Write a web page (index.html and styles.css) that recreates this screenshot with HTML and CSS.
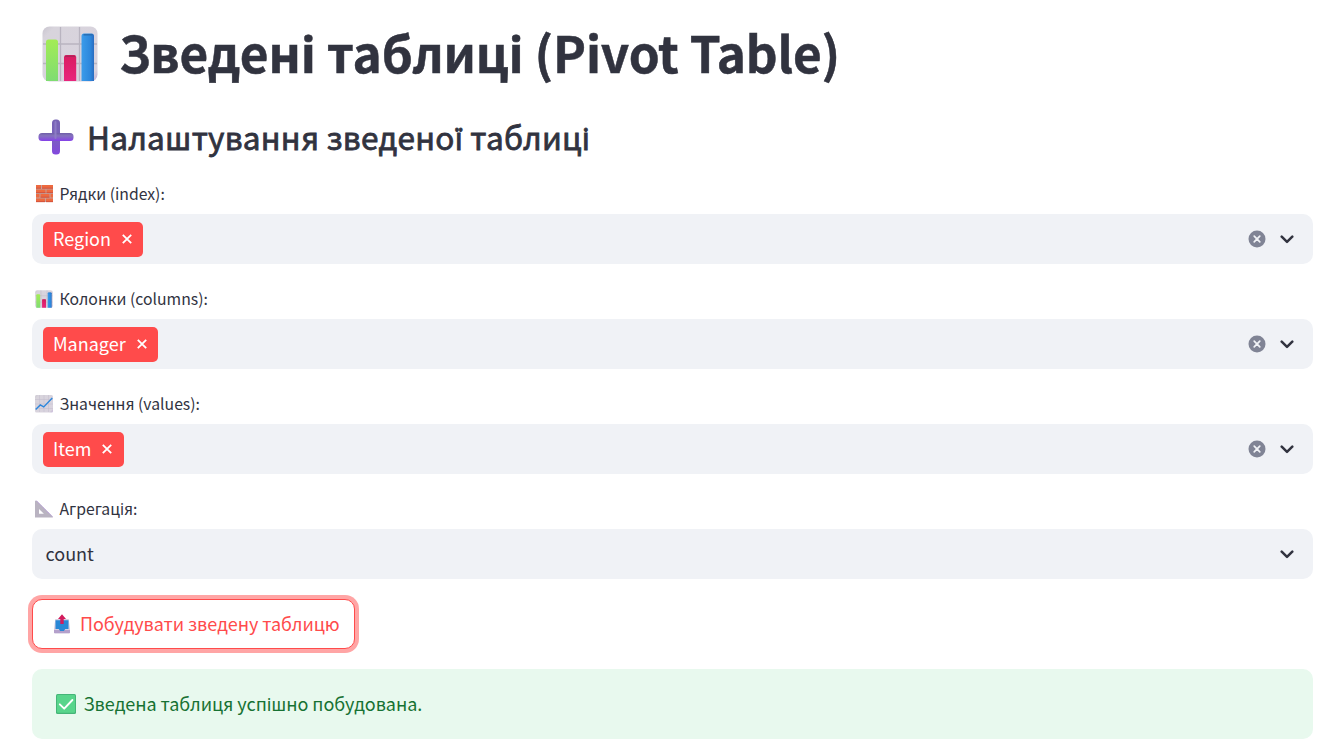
FILE: index.html
```html
<!DOCTYPE html>
<html lang="uk">
<head>
<meta charset="utf-8">
<title>Зведені таблиці</title>
<link rel="stylesheet" href="styles.css">
</head>
<body>
<svg class="defs" aria-hidden="true">
  <defs>
    <linearGradient id="board" x1="0" y1="0" x2="1" y2="1"><stop offset="0" stop-color="#c9c5cf"/><stop offset=".12" stop-color="#d8d4dc"/><stop offset=".88" stop-color="#d9d3de"/><stop offset="1" stop-color="#bfaed4"/></linearGradient>
    <linearGradient id="green" x1="0" y1="0" x2="0" y2="1"><stop offset="0" stop-color="#a3ec55"/><stop offset="1" stop-color="#7fdc72"/></linearGradient>
    <linearGradient id="pink" x1="0" y1="0" x2="0" y2="1"><stop offset="0" stop-color="#d91b60"/><stop offset="1" stop-color="#e8267c"/></linearGradient>
    <linearGradient id="blue" x1="0" y1="0" x2="1" y2="0"><stop offset="0" stop-color="#3b9cea"/><stop offset=".7" stop-color="#2d87dc"/><stop offset="1" stop-color="#2a6cc0"/></linearGradient>
    <linearGradient id="violet" x1="0" y1="0" x2="0" y2="1"><stop offset="0" stop-color="#7763b4"/><stop offset=".5" stop-color="#7a63bb"/><stop offset="1" stop-color="#8347df"/></linearGradient>
    <linearGradient id="arm" x1="0" y1="0" x2="0" y2="1"><stop offset="0" stop-color="#6f5da8"/><stop offset=".35" stop-color="#8573bd"/><stop offset="1" stop-color="#8440e8"/></linearGradient>
  </defs>
  <symbol id="chart" viewBox="0 0 56 56">
    <rect x=".5" y=".5" width="55" height="55" rx="7" fill="url(#board)"/>
    <path d="M18.500 1v54M37.500 1v54M1 18h54M1 37.500h54" stroke="#b9b4c0" stroke-width="1.300"/>
    <path d="M4 55V16q0-2.500 2.500-2.500h7q2.500 0 2.500 2.500v39z" fill="url(#green)"/>
    <path d="M22 55V31q0-2 2.500-2h7.500q2.200 0 2.200 2v24z" fill="url(#pink)"/>
    <path d="M39.500 55V10q0-2.500 2.500-2.500h7.500q2.500 0 2.500 2.500v45z" fill="url(#blue)"/>
    <path d="M23 30.300h10" stroke="#ac2558" stroke-width="1.400"/>
    <path d="M41.500 8.800h9" stroke="#286cb0" stroke-width="1.400"/>
  </symbol>
</svg>
<main class="page">
  <h1 class="title"><svg class="title-icon"><use href="#chart"/></svg><span>Зведені таблиці (Pivot Table)</span></h1>
  <h2 class="subtitle">
    <svg class="subtitle-icon" viewBox="0 0 36 36"><rect x="14" y=".5" width="8" height="35" rx="3.500" fill="url(#violet)"/><rect x=".5" y="14" width="35" height="8" rx="3.500" fill="url(#arm)"/><path d="M17.500 3v16" stroke="#8d7cc5" stroke-width="2" stroke-linecap="round"/></svg>
    <span>Налаштування зведеної таблиці</span>
  </h2>

  <section class="field">
    <div class="label">
      <svg class="emoji" viewBox="0 0 18 18"><rect x="1" width="17" height="17" fill="#c4a09a"/><path d="M1 0h5v3.500H1zM7 0h11v3.500H7zM1 4.500h9.500v3.500H1zM11.500 4.500H18V8h-6.500zM1 9h3.500v3.500H1zM5.500 9h9v3.500h-9zM15.500 9H18v3.500h-2.500zM1 13.500h9V17H1zM11 13.500h7V17h-7z" fill="#ed6a40"/><path d="M1 3.200h5M7 3.200h11M1 7.700h9.500M11.500 7.700H18M5.500 12.200h9M1 16.700h9M11 16.700h7" stroke="#c94b3b" stroke-width=".8"/></svg>
      <span>Рядки (index):</span>
    </div>
    <div class="select">
      <div class="tag"><span class="tag-text">Region</span><svg class="tag-close" viewBox="0 0 10 10"><path d="M.8.8l8.400 8.400M9.200.8L.8 9.200"/></svg></div>
      <svg class="clear" viewBox="0 0 18 18"><circle cx="9" cy="9" r="8.500"/><path d="M6.200 6.200l5.600 5.600M11.800 6.200l-5.600 5.600"/></svg>
      <svg class="chevron" viewBox="0 0 14 9"><path d="M1.700 1.700L7 6.900l5.300-5.200"/></svg>
    </div>
  </section>

  <section class="field">
    <div class="label"><svg class="emoji"><use href="#chart"/></svg><span>Колонки (columns):</span></div>
    <div class="select">
      <div class="tag"><span class="tag-text">Manager</span><svg class="tag-close" viewBox="0 0 10 10"><path d="M.8.8l8.400 8.400M9.200.8L.8 9.200"/></svg></div>
      <svg class="clear" viewBox="0 0 18 18"><circle cx="9" cy="9" r="8.500"/><path d="M6.200 6.200l5.600 5.600M11.800 6.200l-5.600 5.600"/></svg>
      <svg class="chevron" viewBox="0 0 14 9"><path d="M1.700 1.700L7 6.900l5.300-5.200"/></svg>
    </div>
  </section>

  <section class="field">
    <div class="label">
      <svg class="emoji" viewBox="0 0 18 18"><rect width="18" height="17.500" rx="1.500" fill="url(#board)"/><path d="M4.500 0v17M9 0v17M13.500 0v17M0 4.500h18M0 9h18M0 13.500h18" stroke="#c3bccd" stroke-width=".5"/><path d="M.7 14.500l4.600-4.600 3.400 2L17.300 3" fill="none" stroke="#2d87dc" stroke-width="1.400"/></svg>
      <span>Значення (values):</span>
    </div>
    <div class="select">
      <div class="tag"><span class="tag-text">Item</span><svg class="tag-close" viewBox="0 0 10 10"><path d="M.8.8l8.400 8.400M9.200.8L.8 9.200"/></svg></div>
      <svg class="clear" viewBox="0 0 18 18"><circle cx="9" cy="9" r="8.500"/><path d="M6.200 6.200l5.600 5.600M11.800 6.200l-5.600 5.600"/></svg>
      <svg class="chevron" viewBox="0 0 14 9"><path d="M1.700 1.700L7 6.900l5.300-5.200"/></svg>
    </div>
  </section>

  <section class="field">
    <div class="label">
      <svg class="emoji" viewBox="0 0 18 18"><path d="M0 1.300Q.8-.3 2 1l15.700 15.500v1H0zM4 9v4.800h4.900z" fill="#b9b3c1" fill-rule="evenodd"/><path d="M1.500.8l16 15.900" stroke="#b99be0" stroke-width="1" stroke-dasharray="1.200 .6"/></svg>
      <span>Агрегація:</span>
    </div>
    <div class="select">
      <span class="value">count</span>
      <svg class="chevron" viewBox="0 0 14 9"><path d="M1.700 1.700L7 6.900l5.300-5.200"/></svg>
    </div>
  </section>

  <button class="build" type="button">
    <svg class="build-icon" viewBox="0 0 18 20"><path d="M2.300 5h13.400l1.300 10v3.500q0 .8-.8.8H1.800q-.8 0-.8-.8V15z" fill="#d5cde0"/><path d="M1 16h16v2.500q0 .8-.8.8H1.800q-.8 0-.8-.8z" fill="#b4a0cb"/><path d="M2.500 6.300h13v8.700h-3.200l-1.500 2H7.200l-1.500-2H2.500z" fill="#2888d6"/><path d="M9 .3l4 4.700h-2.300v5H7.300V5H5z" fill="#d31c5c"/></svg>
    <span>Побудувати зведену таблицю</span>
  </button>

  <div class="alert">
    <svg class="alert-icon" viewBox="0 0 20 20"><rect width="20" height="20" rx="1.500" fill="#45b578"/><rect x="1" y="1" width="18" height="17.800" rx="1" fill="#58d58b"/><path d="M3.800 10.300l4.400 4.400 8.200-8.700" fill="none" stroke="#fff" stroke-width="1.900" stroke-linecap="round" stroke-linejoin="round"/></svg>
    <span>Зведена таблиця успішно побудована.</span>
  </div>
</main>
</body>
</html>
```
FILE: styles.css
```css
* { box-sizing: border-box; }
body {
  margin: 0;
  background: #fff;
  color: #31333f;
  font-family: "Noto Sans CJK SC", "Noto Sans", sans-serif;
  overflow: hidden;
}
svg { display: block; flex: none; }
.defs { position: absolute; width: 0; height: 0; }
.page { padding: 19px 23px 0 32px; }

.title {
  display: flex;
  align-items: center;
  gap: 21px;
  height: 66px;
  margin: 0;
  padding-left: 10px;
  font-size: 49.5px;
  font-weight: 700;
  line-height: 66px;
  letter-spacing: -.19px;
  -webkit-text-stroke: .5px #31333f;
  white-space: nowrap;
}
.title span { height: 66px; }
.title-icon { width: 56px; height: 56px; margin-top: 3px; }

.subtitle {
  display: flex;
  align-items: center;
  gap: 13px;
  height: 42px;
  margin: 31px 0 0;
  padding-left: 6px;
  font-size: 31.5px;
  font-weight: 400;
  line-height: 42px;
  letter-spacing: .24px;
  -webkit-text-stroke: .8px #31333f;
  white-space: nowrap;
}
.subtitle span { height: 44px; }
.subtitle-icon { width: 36px; height: 36px; }

.field { height: 80px; margin-bottom: 25px; }
.subtitle + .field { margin-top: 26px; }
.label {
  display: flex;
  align-items: center;
  gap: 6.4px;
  height: 20px;
  margin-bottom: 10px;
  padding-left: 3px;
  font-size: 15.75px;
  line-height: 20px;
}
.label span { height: 20px; }
.emoji { width: 18px; height: 18px; }

.select {
  display: flex;
  align-items: center;
  height: 50px;
  padding: 0 19px 0 11px;
  border-radius: 10px;
  background: #f0f2f6;
  font-size: 18px;
}
.tag {
  display: flex;
  align-items: center;
  gap: 11px;
  height: 35px;
  margin-top: 1px;
  padding: 0 11.3px 0 10px;
  border-radius: 5px;
  background: #ff4b4b;
  color: #fff;
}
.tag-text { height: 35px; line-height: 33px; }
.tag-close { width: 10px; height: 10px; margin-bottom: 1px; }
.tag-close path { fill: none; stroke: #fff; stroke-width: 1.8; }
.value { height: 50px; padding-left: 2.5px; line-height: 49px; }
.clear { width: 18px; height: 18px; margin-left: auto; }
.clear circle { fill: #808495; }
.clear path { stroke: #f0f2f6; stroke-width: 1.7; stroke-linecap: round; }
.chevron { width: 14px; height: 9px; margin-left: auto; }
.clear + .chevron { margin-left: 14px; }
.chevron path { fill: none; stroke: #31333f; stroke-width: 2.5; stroke-linecap: round; stroke-linejoin: round; }

.build {
  display: flex;
  align-items: center;
  gap: 9px;
  width: 323px;
  height: 50px;
  margin-top: -5px;
  padding: 0 0 0 20px;
  border: 1px solid #ff4b4b;
  border-radius: 10px;
  background: #fff;
  box-shadow: 0 0 0 4px rgba(255, 75, 75, .5);
  color: #ff4b4b;
  font-family: inherit;
  font-size: 18px;
  line-height: 48px;
  letter-spacing: -.06px;
  white-space: nowrap;
}
.build span { height: 50px; }
.build-icon { width: 18px; height: 20px; }

.alert {
  display: flex;
  align-items: center;
  gap: 7.500px;
  height: 70px;
  margin-top: 20px;
  padding-left: 24px;
  border-radius: 10px;
  background: #e8f9ee;
  color: #177233;
  font-size: 18px;
  line-height: 68px;
  letter-spacing: -.06px;
}
.alert span { height: 70px; }
.alert-icon { width: 20px; height: 20px; }
```
